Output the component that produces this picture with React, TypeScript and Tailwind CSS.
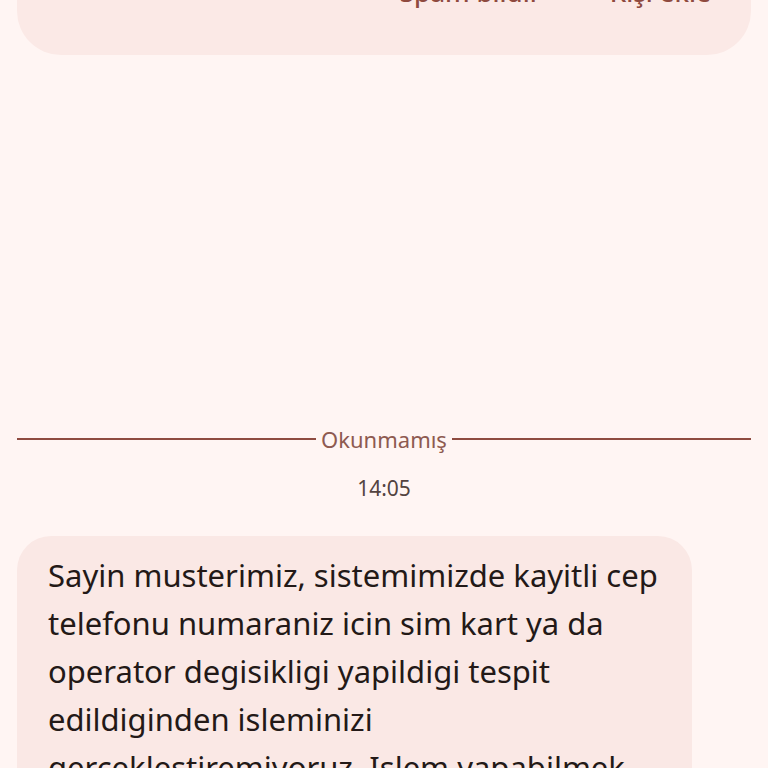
const App = () => {
  return (
    <div
      className="h-[768px] w-[768px] overflow-hidden bg-[#fff5f3]"
      style={{ fontFamily: "'Noto Sans', Roboto, sans-serif" }}
    >
      {/* top card, scrolled mostly out of view */}
      <div className="mx-[17px] -mt-[45px] flex h-[100px] items-start justify-end gap-[69px] rounded-[44px] bg-[#fbe9e6] pr-[40px] pt-[18px]">
        <button className="text-[26px] font-medium text-[#8f4a3f]">Spam bildir</button>
        <button className="text-[26px] font-medium text-[#8f4a3f]">Kişi ekle</button>
      </div>

      <div className="mt-[373px] flex items-center px-[17px]">
        <div className="h-[2px] flex-1 bg-[#8e4b40]" />
        <span className="px-[5px] text-[22px] leading-none text-[#8e5a50]">Okunmamış</span>
        <div className="h-[2px] flex-1 bg-[#8e4b40]" />
      </div>

      <div className="mt-[28px] text-center text-[21px] leading-none text-[#534340]">14:05</div>

      <div className="ml-[17px] mt-[37px] w-[675px] rounded-[34px] bg-[#fae8e5] pl-[31px] pr-[26px] pt-[15px] pb-[20px]">
        <p className="text-[31px] leading-[48px] text-[#231917]">
          Sayin musterimiz, sistemimizde kayitli cep telefonu numaraniz icin sim kart ya da operator
          degisikligi yapildigi tespit edildiginden isleminizi gerceklestiremiyoruz. Islem yapabilmek
          icin lutfen bankamizi arayiniz.
        </p>
      </div>
    </div>
  );
};

export default App;
